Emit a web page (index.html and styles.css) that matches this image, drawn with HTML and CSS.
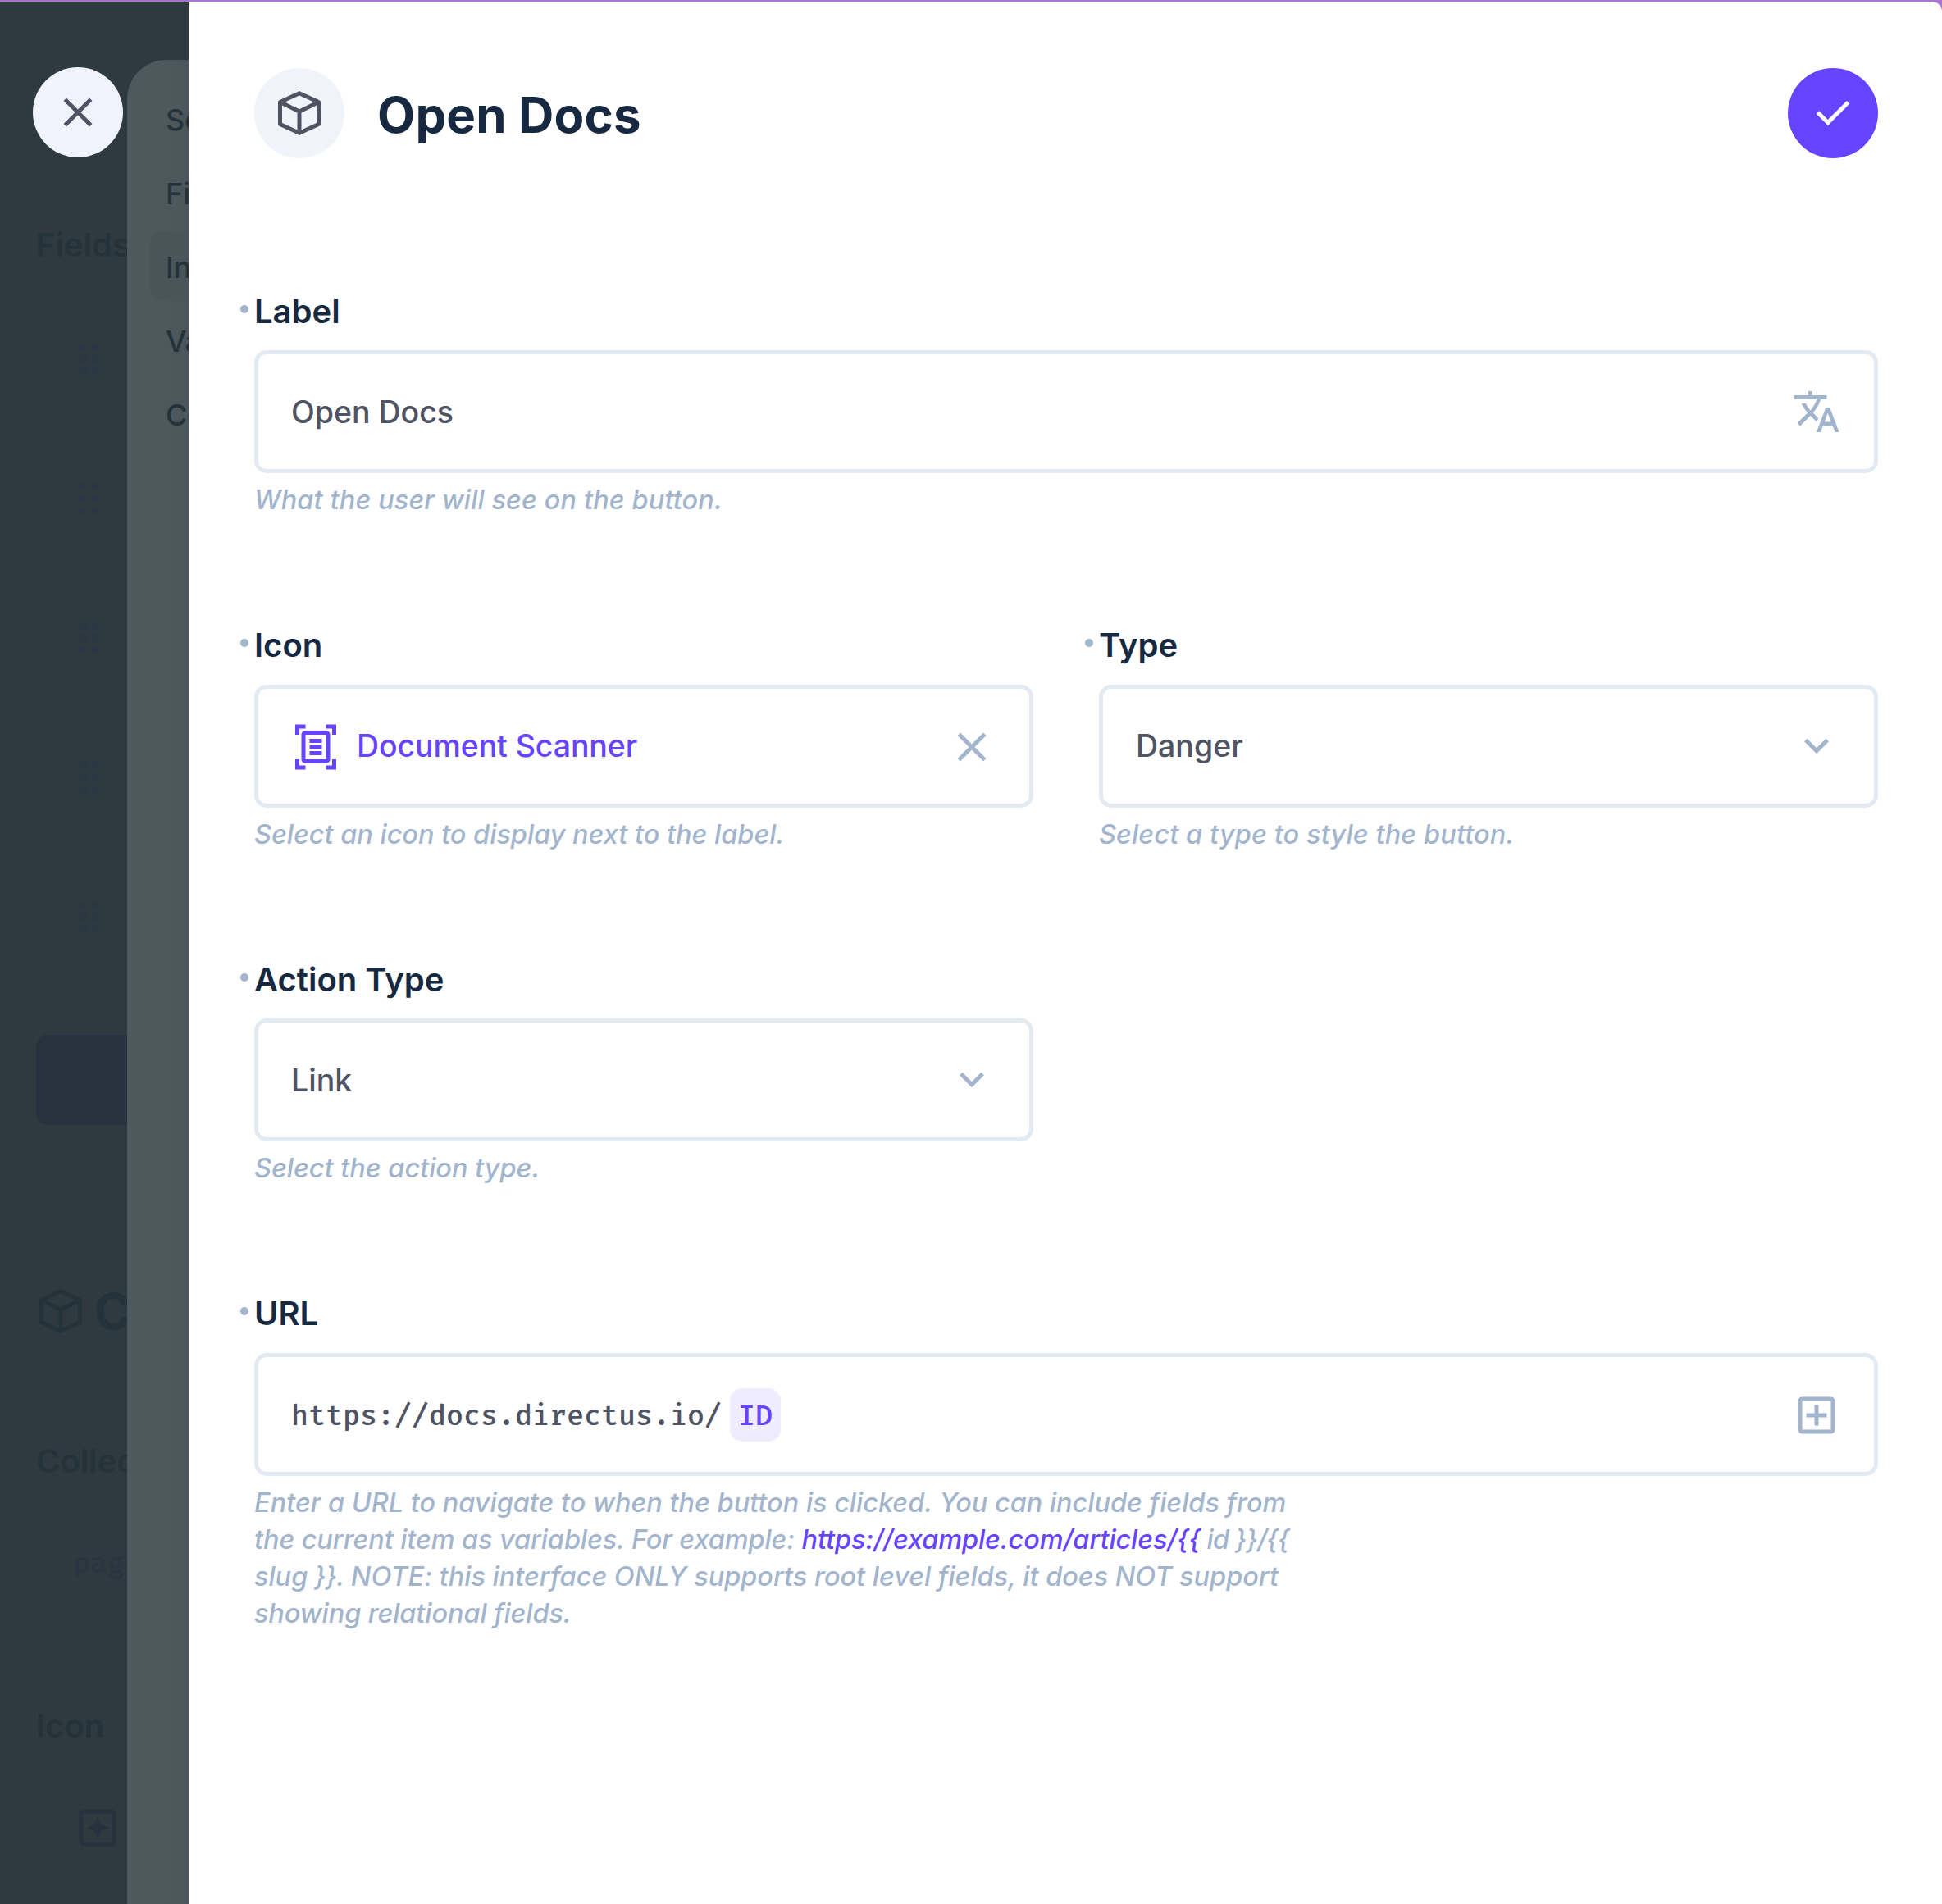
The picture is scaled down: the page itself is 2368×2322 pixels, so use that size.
FILE: index.html
```html
<!DOCTYPE html>
<html lang="en">
<head>
<meta charset="utf-8">
<title>Open Docs</title>
<link rel="stylesheet" href="styles.css">
</head>
<body>
<div class="app">
  <aside class="backdrop" aria-hidden="true">
    <div class="under">
      <h3 class="under-label">Fields</h3>
      <div class="grips">
        <svg viewBox="0 0 28 40"><use href="#grip"/></svg>
        <svg viewBox="0 0 28 40"><use href="#grip"/></svg>
        <svg viewBox="0 0 28 40"><use href="#grip"/></svg>
        <svg viewBox="0 0 28 40"><use href="#grip"/></svg>
        <svg viewBox="0 0 28 40"><use href="#grip"/></svg>
      </div>
      <div class="under-button"></div>
      <div class="under-title"><svg class="icon" viewBox="0 0 24 24"><use href="#box"/></svg><span>C</span></div>
      <h3 class="under-label">Collection</h3>
      <div class="under-input mono">pages</div>
      <h3 class="under-label">Icon</h3>
      <div class="under-input"><svg class="icon star" viewBox="0 0 24 24"><use href="#star"/></svg></div>
    </div>
    <nav class="layer">
      <span>Schema</span><span>Field</span><span class="active">Interface</span><span>Validation</span><span>Conditions</span>
    </nav>
    <button class="round close"><svg class="icon" viewBox="0 0 24 24"><use href="#close"/></svg></button>
  </aside>
  <main class="drawer">
    <header class="head">
      <span class="round avatar"><svg class="icon" viewBox="0 0 24 24"><use href="#box"/></svg></span>
      <h1>Open Docs</h1>
      <button class="round save"><svg class="icon" viewBox="0 0 24 24"><use href="#check"/></svg></button>
    </header>
    <form class="form">
      <section class="field full">
        <h2>Label</h2>
        <div class="input"><span>Open Docs</span><svg class="icon" viewBox="0 0 24 24"><use href="#translate"/></svg></div>
        <p class="loose">What the user will see on the button.</p>
      </section>
      <section class="field">
        <h2>Icon</h2>
        <div class="input nudged"><svg class="icon picked" viewBox="0 0 24 24"><use href="#scanner"/></svg><span class="accent">Document Scanner</span><svg class="icon" viewBox="0 0 24 24"><use href="#close"/></svg></div>
        <p>Select an icon to display next to the label.</p>
      </section>
      <section class="field">
        <h2>Type</h2>
        <div class="input"><span>Danger</span><svg class="icon" viewBox="0 0 24 24"><use href="#chevron"/></svg></div>
        <p class="loose">Select a type to style the button.</p>
      </section>
      <section class="field alone">
        <h2>Action Type</h2>
        <div class="input"><span>Link</span><svg class="icon" viewBox="0 0 24 24"><use href="#chevron"/></svg></div>
        <p>Select the action type.</p>
      </section>
      <section class="field full">
        <h2>URL</h2>
        <div class="input mono nudged"><span>https://docs.directus.io/<b class="chip">ID</b></span><svg class="icon" viewBox="0 0 24 24"><use href="#add"/></svg></div>
        <p>Enter a URL to navigate to when the button is clicked. You can include fields from<br><span class="tight">the current item as variables. For example: <a>https://example.com/articles/{{</a></span><span class="braces"> id }}/{{</span><br>slug<span class="braces"> }}.</span> NOTE: this interface ONLY supports root level fields, it does NOT support<br><span class="tight">showing relational fields.</span></p>
      </section>
    </form>
  </main>
</div>
<svg class="defs" width="0" height="0">
  <symbol id="box" viewBox="0 0 24 24"><path fill="none" stroke="currentColor" stroke-width="2" stroke-linejoin="round" d="M12 2.3 21.400 6.600V17.400L12 21.700 2.600 17.400V6.600ZM2.600 6.600 12 11.200 21.400 6.600M12 11.200V21.700"/></symbol>
  <symbol id="close" viewBox="0 0 24 24"><path d="M19 6.41 17.59 5 12 10.59 6.41 5 5 6.41 10.59 12 5 17.59 6.41 19 12 13.41 17.59 19 19 17.59 13.41 12z"/></symbol>
  <symbol id="check" viewBox="0 0 24 24"><path d="M9.55 18l-5.7-5.7 1.425-1.425L9.55 15.15l9.175-9.175L20.15 7.4z"/></symbol>
  <symbol id="chevron" viewBox="0 0 24 24"><path d="M7.41 8.29 12 12.87l4.59-4.58L18 9.7l-6 6-6-6z"/></symbol>
  <symbol id="translate" viewBox="0 0 24 24"><path d="m12.87 15.07-2.54-2.51.03-.03c1.74-1.94 2.98-4.17 3.71-6.53H17V4h-7V2H8v2H1v1.99h11.17C11.5 7.92 10.44 9.75 9 11.35 8.07 10.32 7.3 9.19 6.69 8h-2c.73 1.63 1.73 3.17 2.98 4.56l-5.09 5.02L4 19l5-5 3.11 3.11zM18.500 10h-2L12 22h2l1.120-3h4.750L21 22h2zm-2.620 7 1.620-4.330L19.120 17z"/></symbol>
  <symbol id="add" viewBox="0 0 24 24"><path d="M19 3H5c-1.100 0-2 .9-2 2v14c0 1.100.9 2 2 2h14c1.100 0 2-.9 2-2V5c0-1.100-.9-2-2-2zm0 16H5V5h14zm-8-2h2v-4h4v-2h-4V7h-2v4H7v2h4z"/></symbol>
  <symbol id="scanner" viewBox="0 0 24 24"><path fill-rule="evenodd" d="M7 3H4v3H2V1h5zm15 3V1h-5v2h3v3zM7 21H4v-3H2v5h5zm13-3v3h-3v2h5v-5zM17 6v12H7V6zm2 0c0-1.100-.9-2-2-2H7c-1.100 0-2 .9-2 2v12c0 1.100.9 2 2 2h10c1.100 0 2-.9 2-2zm-4 2H9v2h6zm0 3H9v2h6zm0 3H9v2h6z"/></symbol>
  <symbol id="star" viewBox="0 0 24 24"><path fill-rule="evenodd" d="M19 3H5c-1.100 0-2 .9-2 2v14c0 1.100.9 2 2 2h14c1.100 0 2-.9 2-2V5c0-1.100-.9-2-2-2zm0 16H5V5h14zM12 17.500l1.700-3.800L17.500 12l-3.800-1.700L12 6.500l-1.700 3.800L6.500 12l3.800 1.700z"/></symbol>
  <symbol id="grip" viewBox="0 0 28 40"><circle cx="6" cy="5" r="4.800"/><circle cx="21" cy="5" r="4.800"/><circle cx="6" cy="20" r="4.800"/><circle cx="21" cy="20" r="4.800"/><circle cx="6" cy="35" r="4.800"/><circle cx="21" cy="35" r="4.800"/></symbol>
</svg>
</body>
</html>
```
FILE: styles.css
```css
* { box-sizing: border-box; }
body { margin: 0; font-family: Inter, "Liberation Sans", sans-serif; font-weight: 500; color: #4f5464; background: #a972cc; overflow: hidden; }
h1, h2, h3, p { margin: 0; }
button { border: 0; padding: 0; }
.defs { position: absolute; }
.app { display: flex; width: 2368px; height: 2322px; padding-top: 2px; }
.icon { width: 60px; height: 60px; flex: none; fill: currentColor; display: block; }
.round { width: 110px; height: 110px; border-radius: 50%; flex: none; display: flex; align-items: center; justify-content: center; }

/* Dimmed pages behind the drawer */
.backdrop { position: relative; width: 230px; flex: none; overflow: hidden; background: #2f3a40; }
.under { width: 230px; padding: 267px 0 0 44px; color: #243239; white-space: nowrap; }
.under-label { font-size: 40px; line-height: 60px; font-weight: 600; }
.grips { display: flex; flex-direction: column; gap: 130px; padding: 89px 0 0 52px; }
.grips svg { display: block; width: 28px; height: 40px; fill: #2a3843; }
.under-button { height: 110px; margin: 124px 0 182px; border-radius: 15px; background: #27323f; }
.under-title { display: flex; align-items: center; gap: 11px; height: 90px; margin-bottom: 108px; font-size: 60px; font-weight: 700; }
.under-input { height: 150px; margin: 19px 0 94px; padding-left: 40px; border: 5px solid #2d383f; border-radius: 15px; display: flex; align-items: center; color: #29353f; }
.star { color: #27323f; }
.layer { position: absolute; left: 155px; top: 71px; width: 120px; height: 2300px; padding: 29px 28px; border-radius: 48px 0 0 0; background: linear-gradient(90deg, #4e595e 40px, #4b565b 75px); color: #24323a; font-size: 36px; letter-spacing: -0.3px; display: flex; flex-direction: column; gap: 5px; }
.layer span { height: 85px; padding-left: 19px; line-height: 88px; border-radius: 15px; }
.layer .active { background: #4a555a; }
.close { position: absolute; left: 40px; top: 80px; background: #f0f3fc; color: #4f5464; }

/* Drawer */
.drawer { flex: 1; background: #fff; border-top-right-radius: 12px; padding: 81px 78px 0 80px; }
.head { display: flex; align-items: center; height: 110px; }
.avatar { background: #f0f3fa; }
.head h1 { flex: 1; margin-left: 40px; padding-top: 4px; font-size: 60px; line-height: 80px; font-weight: 700; color: #172940; letter-spacing: 0.15px; }
.save { background: #6644ff; color: #fff; }
.form { display: grid; grid-template-columns: 950px 950px; column-gap: 80px; padding-top: 156.9px; }
.field { height: 407.5px; }
.full { grid-column: 1 / 3; }
.alone { grid-column: 1; }
.field h2 { position: relative; height: 77.5px; font-size: 40px; line-height: 60px; font-weight: 600; color: #172940; }
.field h2::before { content: ""; position: absolute; left: -17px; top: 22px; width: 10px; height: 10px; border-radius: 50%; background: #a2b5cd; }
.input { height: 150px; border: 5px solid #e4eaf1; border-radius: 15px; padding: 0 40px; display: flex; align-items: center; font-size: 37.5px; }
.input > span { flex: 1; }
.input > .icon { color: #a2b5cd; }
.input > .icon.picked { color: #6644ff; margin-right: 20px; }
.nudged > .icon { margin-top: 2px; }
.accent { color: #6644ff; letter-spacing: -0.1px; }
.mono { font-family: "Fira Mono", "Liberation Mono", monospace; font-size: 35px; }
.mono.nudged { padding-top: 1px; }
.chip { display: inline-block; margin-left: 10px; padding: 0 10px; height: 65px; line-height: 67px; border-radius: 15px; background: #f0ecff; color: #6644ff; font-weight: 500; }
.field p { margin-top: 10px; font-size: 32.5px; line-height: 45px; font-style: italic; color: #a2b5cd; white-space: nowrap; letter-spacing: -0.03px; }
.field .loose { letter-spacing: 0.1px; }
.tight { letter-spacing: -0.12px; }
.braces { letter-spacing: -0.8px; }
.field a { color: #6644ff; }
```
